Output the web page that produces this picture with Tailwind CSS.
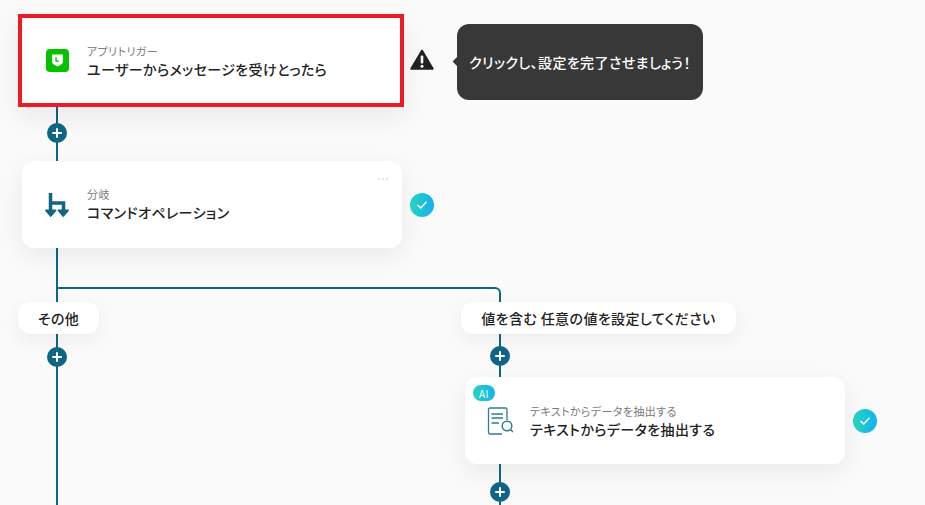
<!DOCTYPE html>
<html lang="ja">
<head>
<meta charset="utf-8">
<title>Flow</title>
<script src="https://cdn.jsdelivr.net/npm/@tailwindcss/browser@4"></script>
</head>
<body class="m-0 overflow-hidden bg-[#fafafa] font-['Noto_Sans_CJK_JP','Noto_Sans',sans-serif] text-[#222222] tracking-[0.4px] [font-feature-settings:'palt']">
<div class="relative w-[925px] h-[505px] overflow-hidden">

    <!-- connector lines -->
    <div class="absolute left-[56px] top-[100px] w-[2px] h-[405px] bg-[#0e6682]"></div>
    <div class="absolute left-[57px] top-[287px] w-[444px] h-[60px] border-t-2 border-r-2 border-[#0e6682] rounded-tr-[6px]"></div>
    <div class="absolute left-[499px] top-[340px] w-[2px] h-[165px] bg-[#0e6682]"></div>

    <!-- trigger -->
    <div class="absolute left-[18px] top-[14px] w-[386px] h-[93px] border-4 border-[#ec1c24] bg-white flex items-center shadow-[0_10px_24px_rgba(0,0,0,0.07)]">
        <div class="w-[65px] pl-[24px] pb-[1px]">
            <svg class="w-[23px] h-[23px]" viewBox="0 0 23 23">
                <rect width="23" height="23" rx="4" fill="#06c100"/>
                <path d="M6 5.500h11v7.500c0 1.800-3 3.300-5.500 4.500C9 16.300 6 14.800 6 13z" fill="#fff"/>
                <path d="M10 8v4.200h3" fill="none" stroke="#06c100" stroke-width="1.200"/>
            </svg>
        </div>
        <div class="flex flex-col pt-[2px]">
            <span class="text-[11px] leading-[16px] text-[#7a7a7a]">アプリトリガー</span>
            <span class="text-[14px] leading-[21px] font-medium whitespace-nowrap">ユーザーからメッセージを受けとったら</span>
        </div>
    </div>

    <!-- warning + tooltip -->
    <svg class="absolute left-[410px] top-[48px] w-[24px] h-[23px]" viewBox="0 0 24 23">
        <path d="M12 2.500 22.800 20.800H1.200z" fill="#222222" stroke="#222222" stroke-width="1.800" stroke-linejoin="round"/>
        <rect x="10.700" y="7.500" width="2.600" height="8" rx="1" fill="#fff"/>
        <circle cx="12" cy="18.300" r="1.500" fill="#fff"/>
    </svg>
    <div class="absolute left-[454px] top-[58px] w-[7px] h-[7px] rotate-45 bg-[#383838]"></div>
    <div class="absolute left-[457px] top-[24px] w-[246px] h-[76px] rounded-[12px] bg-[#383838] text-white text-[14px] font-medium flex items-center justify-center whitespace-nowrap">クリックし、設定を完了させましょう！</div>

    <!-- plus buttons -->
    <div class="absolute left-[47px] top-[123px] w-[20px] h-[20px] rounded-full bg-[#0e6682] flex items-center justify-center">
        <svg class="w-[10px] h-[10px]" viewBox="0 0 10 10"><path d="M5 1v8M1 5h8" stroke="#fff" stroke-width="2" stroke-linecap="round"/></svg>
    </div>
    <div class="absolute left-[47px] top-[347px] w-[20px] h-[20px] rounded-full bg-[#0e6682] flex items-center justify-center">
        <svg class="w-[10px] h-[10px]" viewBox="0 0 10 10"><path d="M5 1v8M1 5h8" stroke="#fff" stroke-width="2" stroke-linecap="round"/></svg>
    </div>
    <div class="absolute left-[490px] top-[346px] w-[20px] h-[20px] rounded-full bg-[#0e6682] flex items-center justify-center">
        <svg class="w-[10px] h-[10px]" viewBox="0 0 10 10"><path d="M5 1v8M1 5h8" stroke="#fff" stroke-width="2" stroke-linecap="round"/></svg>
    </div>
    <div class="absolute left-[490px] top-[482px] w-[20px] h-[20px] rounded-full bg-[#0e6682] flex items-center justify-center">
        <svg class="w-[10px] h-[10px]" viewBox="0 0 10 10"><path d="M5 1v8M1 5h8" stroke="#fff" stroke-width="2" stroke-linecap="round"/></svg>
    </div>

    <!-- branch -->
    <div class="absolute left-[22px] top-[161px] w-[380px] h-[87px] rounded-[12px] bg-white flex items-center shadow-[0_8px_24px_rgba(0,0,0,0.07)]">
        <div class="w-[65px] pl-[23px]">
            <svg class="w-[24px] h-[24px] block" viewBox="0 0 24 24">
                <path d="M5.500 0v18M5.500 10h13v8" fill="none" stroke="#0e6682" stroke-width="3.500"/>
                <path d="M1 17.500h9.500l-4.750 5.500zM13.500 17.500H23l-4.750 5.500z" fill="#0e6682" stroke="#0e6682" stroke-width="1.800" stroke-linejoin="round"/>
            </svg>
        </div>
        <div class="flex flex-col pb-[2px]">
            <span class="text-[11px] leading-[16px] text-[#7a7a7a]">分岐</span>
            <span class="text-[14px] leading-[20px] font-medium whitespace-nowrap">コマンドオペレーション</span>
        </div>
        <div class="absolute right-[14px] top-[17px] flex gap-[2px]">
            <span class="w-[2px] h-[2px] bg-[#e8e8e8]"></span>
            <span class="w-[2px] h-[2px] bg-[#e8e8e8]"></span>
            <span class="w-[2px] h-[2px] bg-[#e8e8e8]"></span>
        </div>
    </div>
    <div class="absolute left-[410px] top-[193px] w-[24px] h-[24px] rounded-full bg-linear-to-r from-[#2ad4b8] to-[#18b0f0] flex items-center justify-center">
        <svg class="w-[12px] h-[10px]" viewBox="0 0 12 10"><path d="M1.500 5 4.700 8 10.500 1.800" fill="none" stroke="#fff" stroke-width="1.500"/></svg>
    </div>

    <!-- branch labels -->
    <div class="absolute left-[18px] top-[302px] w-[81px] h-[32px] rounded-[12px] bg-white flex items-center justify-center text-[14px] font-medium shadow-[0_6px_18px_rgba(0,0,0,0.06)]">その他</div>
    <div class="absolute left-[461px] top-[302px] w-[275px] h-[32px] rounded-[12px] bg-white flex items-center justify-center text-[14px] font-medium whitespace-nowrap shadow-[0_6px_18px_rgba(0,0,0,0.06)]">値を含む 任意の値を設定してください</div>

    <!-- extract step -->
    <div class="absolute left-[465px] top-[377px] w-[380px] h-[87px] rounded-[12px] bg-white flex items-center shadow-[0_8px_24px_rgba(0,0,0,0.07)]">
        <div class="w-[65px] pl-[22px]">
            <svg class="w-[26px] h-[28px] block" viewBox="0 0 26 28">
                <path d="M15 27H3a1.500 1.500 0 0 1-1.500-1.500V2.500A1.500 1.500 0 0 1 3 1h15.500A1.500 1.500 0 0 1 20 2.500V13" fill="none" stroke="#2a7f98" stroke-width="1.300"/>
                <path d="M4.500 7H16M4.500 11H16M4.500 16H12" fill="none" stroke="#2a7f98" stroke-width="1.300"/>
                <circle cx="20" cy="19" r="4.800" fill="#fff" stroke="#2a7f98" stroke-width="1.500"/>
                <path d="m23.500 22.500 2.500 2.500" stroke="#2a7f98" stroke-width="1.500"/>
            </svg>
        </div>
        <div class="flex flex-col pb-[1px] pt-[2px]">
            <span class="text-[11px] leading-[16px] text-[#7a7a7a]">テキストからデータを抽出する</span>
            <span class="text-[14px] leading-[21px] font-medium whitespace-nowrap">テキストからデータを抽出する</span>
        </div>
        <div class="absolute left-[8px] top-[8px] w-[22px] h-[16px] rounded-full bg-linear-to-r from-[#2ad4b8] to-[#18b0f0] text-white text-[10px] flex items-center justify-center">AI</div>
    </div>
    <div class="absolute left-[853px] top-[409px] w-[24px] h-[24px] rounded-full bg-linear-to-r from-[#2ad4b8] to-[#18b0f0] flex items-center justify-center">
        <svg class="w-[12px] h-[10px]" viewBox="0 0 12 10"><path d="M1.500 5 4.700 8 10.500 1.800" fill="none" stroke="#fff" stroke-width="1.500"/></svg>
    </div>
</div>
</body>
</html>
